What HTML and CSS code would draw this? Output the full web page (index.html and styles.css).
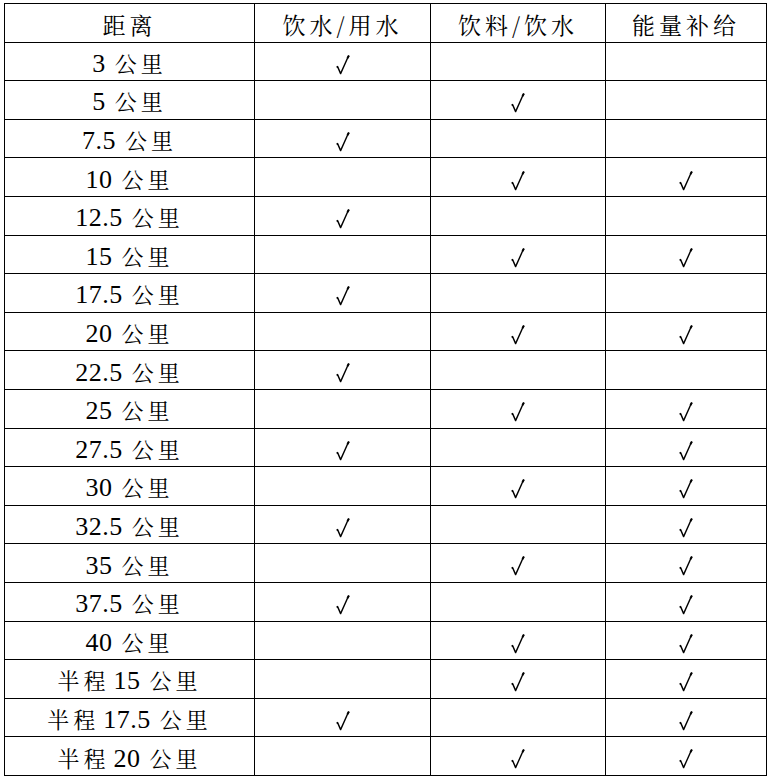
FILE: index.html
```html
<!DOCTYPE html>
<html lang="zh-CN">
<head>
<meta charset="utf-8">
<title>补给站</title>
<link rel="stylesheet" href="styles.css">
</head>
<body>
<table class="supply">
  <colgroup>
    <col class="c-dist"><col class="c-water"><col class="c-drink"><col class="c-energy">
  </colgroup>
  <thead>
    <tr><th>距离</th><th>饮水/用水</th><th>饮料/饮水</th><th>能量补给</th></tr>
  </thead>
  <tbody id="rows"></tbody>
</table>
<script src="app.js"></script>
</body>
</html>
```

FILE: styles.css
```css
html, body {
  margin: 0;
  padding: 0;
  background: #fff;
}
body {
  padding: 3px 0 0 4px;
  color: #000;
  font-family: "Noto Serif CJK SC", "Noto Sans CJK SC", "Liberation Serif", serif;
}
.supply {
  border-collapse: collapse;
  width: 762px;
  table-layout: fixed;
}
.c-dist { width: 250px; }
.c-water { width: 176px; }
.c-drink { width: 175px; }
.c-energy { width: 161px; }
.supply tr { height: 38.6px; }
.supply th,
.supply td {
  border: 1px solid #000;
  padding: 4px 0 0 0;
  text-align: center;
  vertical-align: middle;
  font-weight: normal;
  font-size: 22px;
  line-height: 26px;
  letter-spacing: 4px;
  white-space: nowrap;
}
.supply th {
  font-size: 23px;
  letter-spacing: 4px;
}
.n {
  font-family: "Liberation Serif", serif;
  font-size: 26px;
  letter-spacing: 0.5px;
}
.gap { margin-left: 9px; }
.gap-s { margin-left: 4px; }
.chk {
  display: inline-block;
  width: 14px;
  height: 20px;
  vertical-align: middle;
  margin-top: -4px;
}
```

FILE: app.js
```js
const data = [
  ["3", 1, 0, 0],
  ["5", 0, 1, 0],
  ["7.5", 1, 0, 0],
  ["10", 0, 1, 1],
  ["12.5", 1, 0, 0],
  ["15", 0, 1, 1],
  ["17.5", 1, 0, 0],
  ["20", 0, 1, 1],
  ["22.5", 1, 0, 0],
  ["25", 0, 1, 1],
  ["27.5", 1, 0, 1],
  ["30", 0, 1, 1],
  ["32.5", 1, 0, 1],
  ["35", 0, 1, 1],
  ["37.5", 1, 0, 1],
  ["40", 0, 1, 1],
  ["半程 15", 0, 1, 1],
  ["半程 17.5", 1, 0, 1],
  ["半程 20", 0, 1, 1]
];
const check = '<svg class="chk" viewBox="0 0 14 20" aria-label="√"><path d="M0.6 12.4 L1.6 11.6 L4.6 18.6 L12.6 0.8" fill="none" stroke="#000" stroke-width="1.4" stroke-linejoin="round"/><path d="M11.4 3.2 L13 0.6" stroke="#000" stroke-width="2"/></svg>';
const tbody = document.getElementById("rows");
data.forEach(([d, a, b, c]) => {
  const tr = document.createElement("tr");
  let label;
  if (d.startsWith("半程 ")) {
    const num = d.slice(3);
    label = '<span>半程</span><span class="n gap-s">' + num + '</span><span class="gap">公里</span>';
  } else {
    label = '<span class="n">' + d + '</span><span class="gap">公里</span>';
  }
  tr.innerHTML = '<td>' + label + '</td>' +
    '<td>' + (a ? check : '') + '</td>' +
    '<td>' + (b ? check : '') + '</td>' +
    '<td>' + (c ? check : '') + '</td>';
  tbody.appendChild(tr);
});
```
